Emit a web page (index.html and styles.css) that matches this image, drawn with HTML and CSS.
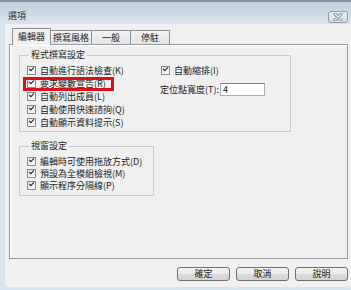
FILE: index.html
```html
<!DOCTYPE html>
<html lang="zh-Hant">
  <head>
    <meta charset="UTF-8" />
    <meta name="viewport" content="width=device-width, initial-scale=1.0" />
    <title>選項</title>
    <link rel="stylesheet" href="styles.css">
  </head>
  <body>
    <div class="window">
      <!-- Title bar -->
      <div class="titlebar">
        <span class="title">選項</span>
        <span class="close">
          <svg width="10" height="8" viewBox="0 0 10 8">
            <path d="M2 1 L8 7 M8 1 L2 7" stroke="#6f7a86" stroke-width="3" stroke-linecap="round" />
            <path d="M2 1 L8 7 M8 1 L2 7" stroke="#f4f7fa" stroke-width="1.3" stroke-linecap="round" />
          </svg>
        </span>
      </div>

      <div class="client">
        <!-- Tabs -->
        <div class="tabs">
          <span class="tab active">編輯器</span>
          <span class="tab">撰寫風格</span>
          <span class="tab">一般</span>
          <span class="tab">停駐</span>
        </div>

        <div class="panel">
          <fieldset class="group code-group">
            <legend>程式撰寫設定</legend>
            <div class="cols">
              <div class="col">
                <label class="check"><span class="box"></span>自動進行語法檢查(K)</label>
                <label class="check marked"><span class="box"></span>要求變數宣告(R)</label>
                <label class="check"><span class="box"></span>自動列出成員(L)</label>
                <label class="check"><span class="box"></span>自動使用快速諮詢(Q)</label>
                <label class="check"><span class="box"></span>自動顯示資料提示(S)</label>
              </div>
              <div class="col">
                <label class="check"><span class="box"></span>自動縮排(I)</label>
                <div class="tabwidth">
                  <span>定位點寬度(T):</span>
                  <span class="input">4</span>
                </div>
              </div>
            </div>
          </fieldset>

          <fieldset class="group window-group">
            <legend>視窗設定</legend>
            <label class="check"><span class="box"></span>編輯時可使用拖放方式(D)</label>
            <label class="check"><span class="box"></span>預設為全模組檢視(M)</label>
            <label class="check"><span class="box"></span>顯示程序分隔線(P)</label>
          </fieldset>
        </div>

        <!-- Dialog buttons -->
        <div class="buttons">
          <span class="btn">確定</span>
          <span class="btn">取消</span>
          <span class="btn">說明</span>
        </div>
      </div>
    </div>
  </body>
</html>
```

FILE: styles.css
```css
body {
  margin: 0;
  font-family: "Noto Sans CJK TC", "Liberation Sans", sans-serif;
  font-size: 9px;
  color: #222;
}

.window {
  width: 351px;
  height: 290px;
  background: #d8e4f0;
  display: flex;
  flex-direction: column;
  overflow: hidden;
}

.titlebar {
  height: 22px;
  flex-shrink: 0;
  border-top: 2px solid #87929d;
  background: linear-gradient(#c2d0dd, #d9e4ee);
  display: flex;
  justify-content: space-between;
  align-items: flex-start;
  padding: 0 3px 0 8px;
}

.title {
  margin-top: 7px;
  line-height: 13px;
  color: #333;
}

.close {
  margin-top: 9px;
  width: 18px;
  height: 10px;
  border: 1px solid #8d99a5;
  border-radius: 3px;
  background: linear-gradient(#e6edf4, #d3dee9);
  display: flex;
  align-items: center;
  justify-content: center;
}

.client {
  flex: 1;
  margin: 0 0 3px 5px;
  background: #f0f0f0;
  padding: 4px 3px 0 4px;
}

/* Tabs */
.tabs {
  display: flex;
  align-items: flex-end;
  height: 16px;
  padding-left: 3px;
}

.tab {
  height: 13px;
  line-height: 13px;
  min-width: 34px;
  padding: 0 2px;
  box-sizing: content-box;
  text-align: center;
  border: 1px solid #8e9196;
  border-bottom: none;
  margin-left: -1px;
  background: linear-gradient(#f3f3f3, #e3e3e3);
}

.tab:first-child {
  margin-left: 0;
}

.tab.active {
  min-width: 0;
  padding: 0 5px;
  height: 16px;
  line-height: 16px;
  margin-bottom: -1px;
  background: #f0f0f0;
  position: relative;
  z-index: 1;
}

.panel {
  height: 213px;
  border: 1px solid #979a9f;
  box-shadow: inset 1px 1px 0 #fff;
}

/* Group boxes */
.group {
  margin: 4px 0 0 9px;
  padding: 3px 0 2px 7px;
  border: 1px solid #c9ccd0;
  min-inline-size: 0;
}

.group legend {
  margin-left: 2px;
  padding: 0 2px;
  line-height: 12px;
}

.code-group {
  width: 263px;
}

.window-group {
  width: 126px;
  margin-top: 8px;
  padding-bottom: 4px;
}

.cols {
  display: grid;
  grid-template-columns: 134px 1fr;
}

.check {
  display: flex;
  align-items: center;
  gap: 4px;
  height: 13px;
  white-space: nowrap;
}

.window-group .check {
  height: 12px;
}

.box {
  width: 7px;
  height: 7px;
  flex-shrink: 0;
  border: 1px solid #8b8b8b;
  background: linear-gradient(135deg, #e4e4e4, #fff);
  position: relative;
}

.box::after {
  content: "";
  position: absolute;
  left: 1px;
  top: 0;
  width: 4px;
  height: 2px;
  border-left: 1.5px solid #1a1a1a;
  border-bottom: 1.5px solid #1a1a1a;
  transform: rotate(-48deg);
}

.check.marked {
  position: relative;
}

.check.marked::after {
  content: "";
  position: absolute;
  left: -4px;
  top: 0;
  width: 91px;
  height: 14px;
  box-sizing: border-box;
  border: 3px solid #d6121b;
}

.tabwidth {
  display: flex;
  align-items: center;
  gap: 1px;
  margin: 6px 0 0 -1px;
  white-space: nowrap;
}

.input {
  width: 41px;
  height: 11px;
  line-height: 11px;
  padding-left: 2px;
  border: 1px solid #abadb3;
  border-top-color: #7f8185;
  background: #fff;
}

/* Buttons */
.buttons {
  display: flex;
  justify-content: flex-end;
  gap: 6px;
  margin-top: 8px;
}

.btn {
  width: 51px;
  height: 12px;
  line-height: 12px;
  text-align: center;
  border: 1px solid #707070;
  border-radius: 3px;
  background: linear-gradient(#f2f2f2, #eaeaea 50%, #dcdcdc 50%, #d2d2d2);
}
```
